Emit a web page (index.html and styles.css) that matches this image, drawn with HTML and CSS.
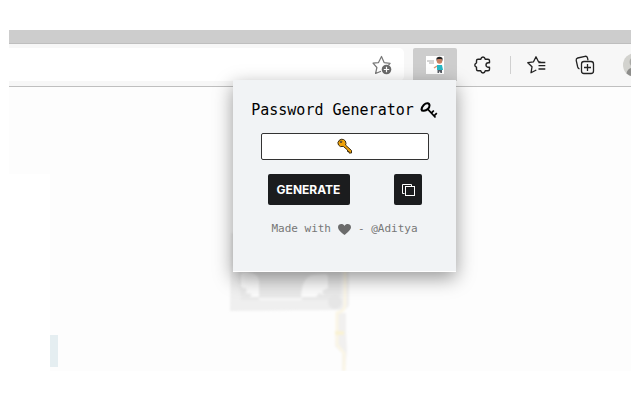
FILE: index.html
```
<!DOCTYPE html>
<html lang="en">

<head>
    <meta charset="UTF-8" />
    <meta name="viewport" content="width=device-width, initial-scale=1.0" />
    <title>Password Generator</title>
    <link rel="stylesheet" href="styles.css">
</head>

<body>
    <div class="browser">
        <div class="tab-strip"></div>
        <div class="toolbar">
            <div class="address-bar">
                <button class="icon-btn" aria-label="Add to favorites">
                    <svg width="20" height="20" viewBox="0 0 20 20" fill="none" stroke="#777" stroke-width="1.2" stroke-linejoin="round">
                        <path d="M9 16.200l-5.400 2.300 1.300-6L1 8.200l5.500-.6L9.500 1.500l2.600 6.100 6 .7-1.600 1.800" />
                        <circle cx="14.500" cy="14.500" r="4.800" fill="#6b6b6b" stroke="none" />
                        <path d="M14.500 11.800v5.400M11.800 14.500h5.400" stroke="#fff" />
                    </svg>
                </button>
            </div>
            <button class="extension" aria-label="Password Generator extension">
                <svg width="18" height="18" viewBox="0 0 18 18">
                    <path d="M0 0h18v18H0z" fill="#fff" />
                    <path d="M1 5h7M3 7h5" stroke="#aaa" />
                    <path d="M8 12l3-2" stroke="#d99a78" stroke-width="1.500" />
                    <path d="M11 9h5l1 5h-6z" fill="#25b7c4" />
                    <path d="M11.500 14h4.500v3h-1.500l-1-2-.5 2h-1.500z" fill="#555b63" />
                    <circle cx="13.500" cy="5" r="2.800" fill="#c98263" />
                    <path d="M10.500 5V2q3-2.500 6 0v3l-1-2h-4z" fill="#222" />
                </svg>
            </button>
            <button class="icon-btn" aria-label="Extensions">
                <svg width="18" height="18" viewBox="0 0 18 18" fill="none" stroke="#222" stroke-width="1.400" stroke-linejoin="round">
                    <path d="M4 3.200h2.700Q7.300 1 9 1t2.300 2.200H14q1.500 0 1.500 1.500v2h-1.200a2.300 2.300 0 0 0 0 4.600h1.200v2q0 1.500-1.500 1.500h-2.700Q10.700 17 9 17t-2.300-2.200H4q-1.500 0-1.500-1.500v-2.100Q.8 10.500.8 9t1.700-2.200V4.700Q2.500 3.200 4 3.200z" />
                </svg>
            </button>
            <span class="divider"></span>
            <button class="icon-btn" aria-label="Favorites">
                <svg width="20" height="18" viewBox="0 0 20 18" fill="none" stroke="#222" stroke-width="1.300" stroke-linejoin="round">
                    <path d="M9.300 14l-5.300 2.800 1-6L.8 6.700l5.700-.9L9 .8l2.500 5h2M11.500 6.500h6.800M11.500 9.700h6.800M11.500 13h6.800" />
                </svg>
            </button>
            <button class="icon-btn" aria-label="Collections">
                <svg width="20" height="20" viewBox="0 0 20 20" fill="none" stroke="#222" stroke-width="1.300">
                    <path d="M4.500 14q-1.400-.5-1.800-2L1.200 5.500q-.3-2 1.500-2.500L10 1.300q2-.3 2.500 1.500l.5 2.500" />
                    <rect x="6.500" y="6.500" width="12" height="12" rx="2.500" />
                    <path d="M12.500 9v7M9 12.500h7" />
                </svg>
            </button>
            <button class="avatar" aria-label="Profile">
                <svg width="24" height="24" viewBox="0 0 24 24">
                    <circle cx="12" cy="12" r="12" fill="#d2d2ce" />
                    <circle cx="12" cy="9" r="5.500" fill="#a9a9a6" />
                    <path d="M3.500 20.500q1-6 8.500-6t8.500 6Q12 27 3.500 20.500z" fill="#8d8d8b" />
                </svg>
            </button>
        </div>

        <!-- Web page behind the popup -->
        <div class="page">
            <div class="page-sidebar"></div>
            <div class="page-tag"></div>
            <svg class="page-photo" width="160" height="142" viewBox="0 0 160 142">
                <defs>
                    <filter id="soft"><feGaussianBlur stdDeviation="1" /></filter>
                </defs>
                <g filter="url(#soft)">
                    <path d="M6 4h118v72q-2 6-10 5L5 82z" fill="#efefef" />
                    <path d="M12 34h104v32l-8 5H16z" fill="#e9e9e9" />
                    <path d="M16 47q0-5 8-4 10 2 10 10v15h-9l2-3-6-1 1-4-6-2zM76 68q1-20 12-22l12-1q3 0 3 4v10l-6 3 2 4-5-2-3 4H76z" fill="#fcfcfc" />
                    <path d="M34 69h43v2H34z" fill="#f8f8f8" />
                    <circle cx="110" cy="73" r="7" fill="#e6e6e6" />
                    <path d="M112 84h9v18l1 20-2 20h-3v-18l-7-7z" fill="#f1f0ef" />
                    <path d="M122 34h16v8h-16z" fill="#ebebeb" />
                    <path d="M120 34v42q0 6-8 8v32l7 8v18" fill="none" stroke="#fbf6e6" stroke-width="3" />
                    <path d="M110 104h9" stroke="#f9f2d4" stroke-width="4" />
                </g>
            </svg>
        </div>

        <!-- Extension popup -->
        <main class="popup">
            <h1 class="title">
                Password Generator
                <svg width="18" height="17" viewBox="0 0 18 17" fill="none" stroke="#000" stroke-width="2">
                    <path d="M1.500 7.500C2 4 5 1 7.500 1.200c2.800.3 2.500 3.800.3 5.800-2.300 2.200-6 2.500-6.300.5z" />
                    <path d="M7.500 6.800l8 8.700M11.600 10.800l2.200-2.300M14.300 13.600l2.500-2.500" stroke-width="1.700" />
                </svg>
            </h1>
            <div class="password-box">
                <input type="text" id="password" aria-label="Generated password" readonly />
                <svg width="16" height="16" viewBox="0 0 16 16" stroke="#3b2c12" stroke-linejoin="round">
                    <path d="M2 2.500Q4 .5 6.500 1.500T9 5.500l-.5 1.500 6 5.500v2.500h-2.500v-1.500h-1.500v-1.500L6.300 8.400Q3 9.500 1.500 7T2 2.500z" fill="#f0a30a" />
                    <circle cx="4" cy="3.800" r=".8" fill="#fff" />
                </svg>
            </div>
            <div class="actions">
                <button class="btn" id="generate">GENERATE</button>
                <button class="btn btn-copy" id="copy" aria-label="Copy password">
                    <svg width="14" height="14" viewBox="0 0 14 14" fill="none" stroke="#fff">
                        <path d="M3.500 10.500h-2v-9h9v2" />
                        <rect x="4.500" y="3.500" width="9" height="9" />
                    </svg>
                </button>
            </div>
            <p class="credit">
                Made with
                <svg width="13" height="11" viewBox="0 0 13 11" fill="#6b6b6b">
                    <path d="M6.500 11Q0 6.500 0 3.300C0-.5 5-1 6.500 2 8-1 13-.5 13 3.300 13 6.500 6.500 11 6.500 11z" />
                </svg>
                - @Aditya
            </p>
        </main>
    </div>
</body>

</html>
```
FILE: styles.css
```
* {
    box-sizing: border-box;
    margin: 0;
    padding: 0;
}

body {
    font-family: "DejaVu Sans Mono", monospace;
    background: #fff;
    min-height: 100vh;
    display: flex;
    flex-direction: column;
    padding: 30px 9px 29px;
}

svg {
    display: block;
    flex-shrink: 0;
}

button {
    border: none;
    cursor: pointer;
}

.browser {
    position: relative;
    flex: 1;
    display: flex;
    flex-direction: column;
    overflow: hidden;
}

.tab-strip {
    height: 14px;
    background: #cdcdcd;
    border-bottom: 1px solid #bebebe;
}

.toolbar {
    display: flex;
    align-items: center;
    height: 43px;
    padding-bottom: 1px;
    background: #f7f7f7;
    border-bottom: 1px solid #bfbfbf;
}

.address-bar {
    flex: 1;
    display: flex;
    align-items: center;
    justify-content: flex-end;
    height: 33px;
    padding-right: 12px;
    background: #fff;
    border-radius: 0 5px 5px 0;
}

.icon-btn {
    display: flex;
    background: none;
}

.extension {
    display: flex;
    align-items: center;
    justify-content: center;
    width: 44px;
    height: 33px;
    margin: 0 17px 0 9px;
    background: #cdcdcd;
    border-radius: 2px 2px 0 0;
}

.divider {
    width: 1px;
    height: 18px;
    margin: 0 16px 0 18px;
    background: #d0d0d0;
}

.icon-btn + .icon-btn {
    margin-left: 28px;
}

.avatar {
    display: flex;
    width: 8px;
    margin-left: 28px;
    background: none;
    overflow: hidden;
}

.page {
    flex: 1;
    display: flex;
    align-items: flex-end;
    background: #fdfdfd;
}

.page-sidebar {
    align-self: stretch;
    width: 41px;
    margin-top: 87px;
    background: #fff;
}

.page-tag {
    width: 8px;
    height: 32px;
    margin-bottom: 4px;
    background: #e5eef1;
}

.page-photo {
    margin-left: 167px;
}

.popup {
    position: absolute;
    top: 50px;
    right: 175px;
    width: 223px;
    padding: 20px 20px 34px;
    display: flex;
    flex-direction: column;
    align-items: center;
    background: #f1f3f5;
    border-bottom: 1px solid #fff;
    box-shadow: 0 6px 18px rgba(0, 0, 0, 0.4);
}

.title {
    display: flex;
    align-items: center;
    gap: 6px;
    font-size: 15px;
    font-weight: normal;
    line-height: 20px;
    white-space: nowrap;
    color: #000;
}

.password-box {
    position: relative;
    width: 168px;
    margin-top: 13px;
}

.password-box input {
    display: block;
    width: 100%;
    height: 27px;
    background: #fff;
    border: 1px solid #333;
    border-radius: 2px;
    text-align: center;
}

.password-box svg {
    position: absolute;
    top: 5px;
    left: 76px;
}

.actions {
    display: flex;
    justify-content: space-between;
    width: 154px;
    margin-top: 14px;
}

.btn {
    display: flex;
    align-items: center;
    justify-content: center;
    width: 82px;
    height: 31px;
    background: #1b1c1e;
    border-radius: 2px;
    color: #fff;
    font-family: Inter, sans-serif;
    font-size: 12px;
    font-weight: bold;
}

.btn-copy {
    width: 28px;
}

.credit {
    display: flex;
    align-items: center;
    gap: 7px;
    margin-top: 16px;
    font-size: 11px;
    line-height: 16px;
    white-space: nowrap;
    color: #777;
}
```
